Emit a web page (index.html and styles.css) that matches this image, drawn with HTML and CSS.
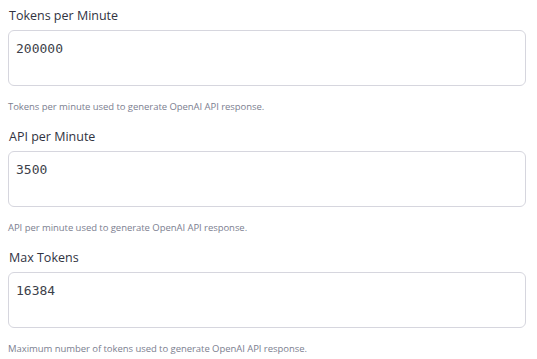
FILE: index.html
```html
<!DOCTYPE html>
<html lang="en">
<head>
  <meta charset="UTF-8" />
  <meta name="viewport" content="width=device-width, initial-scale=1.0"/>
  <title>Settings</title>
  <link rel="stylesheet" href="styles.css">
</head>
<body>
  <div class="form">
    <div class="field">
      <label for="tpm">Tokens per Minute</label>
      <textarea id="tpm">200000</textarea>
      <small>Tokens per minute used to generate OpenAI API response.</small>
    </div>
    <div class="field">
      <label for="apm">API per Minute</label>
      <textarea id="apm">3500</textarea>
      <small>API per minute used to generate OpenAI API response.</small>
    </div>
    <div class="field">
      <label for="maxTokens">Max Tokens</label>
      <textarea id="maxTokens">16384</textarea>
      <small>Maximum number of tokens used to generate OpenAI API response.</small>
    </div>
  </div>
</body>
</html>
```

FILE: styles.css
```css
* { box-sizing: border-box; }
body {
  margin: 0; padding: 0;
  background: #fff;
  font-family: "Open Sans", Arial, sans-serif;
  color: #31333f;
}
.form {
  padding: 6px 11px 0 8px;
  display: flex; flex-direction: column;
}
.field {
  display: flex; flex-direction: column;
  height: 121px;
}
label {
  font-size: 12.5px; line-height: 20px;
  margin: 0 0 4px 1px;
}
textarea {
  width: 100%; height: 56px;
  resize: none;
  border: 1px solid #d6d6de; border-radius: 6px;
  padding: 9px 7px;
  font-family: "DejaVu Sans Mono", monospace; font-size: 13px;
  line-height: 18px;
  color: #3d3f4a; background: #fff;
  outline: none;
}
small {
  margin-top: 13px;
  font-size: 9.5px; line-height: 16px;
  letter-spacing: -0.05px;
  color: #7c8090;
}
```
